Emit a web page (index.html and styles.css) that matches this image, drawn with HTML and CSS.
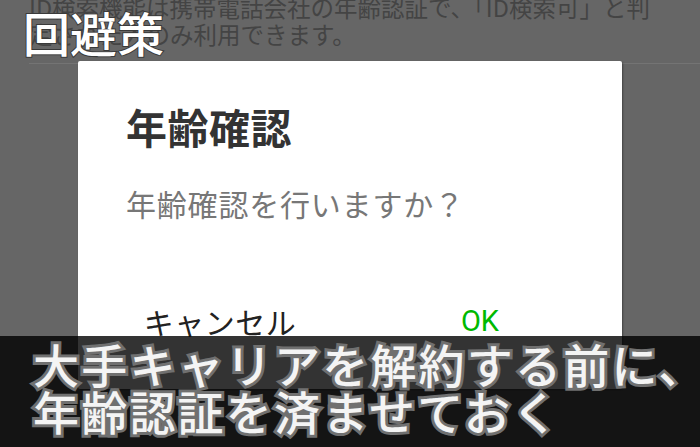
FILE: index.html
```html
<!DOCTYPE html>
<html lang="ja">
<head>
<meta charset="utf-8">
<link rel="stylesheet" href="styles.css">
</head>
<body>
<div class="screen">
  <div class="page-text">
    <p class="info">ID検索機能は携帯電話会社の年齢認証で、「ID検索可」と判定された人のみ利用できます。</p>
    <div class="divider"></div>
  </div>

  <div class="label">回避策</div>

  <div class="dialog">
    <h1 class="dialog-title">年齢確認</h1>
    <p class="dialog-msg">年齢確認を行いますか？</p>
    <div class="dialog-actions">
      <span class="btn btn-cancel">キャンセル</span>
      <span class="btn btn-ok">OK</span>
    </div>
  </div>

  <div class="caption">
    <p class="caption-text">大手キャリアを解約する前に、<br>年齢認証を済ませておく</p>
  </div>
</div>
</body>
</html>
```

FILE: styles.css
```css
html, body {
  margin: 0;
  padding: 0;
}
body {
  width: 700px;
  height: 447px;
  overflow: hidden;
  background: #666666;
  font-family: "Noto Sans CJK JP", "Roboto", sans-serif;
}
.screen {
  position: relative;
  width: 700px;
  height: 447px;
  overflow: hidden;
}
.page-text {
  padding-left: 29px;
}
.info {
  margin: -6px 0 0 0;
  width: 640px;
  font-size: 23.5px;
  line-height: 27px;
  color: #444444;
}
.divider {
  margin-top: 15px;
  height: 1px;
  background: #747474;
}
.label {
  position: absolute;
  left: 23px;
  top: 2px;
  font-size: 47px;
  line-height: 60px;
  font-weight: 500;
  color: #ffffff;
  -webkit-text-stroke: 2px #3a3a3a;
  paint-order: stroke fill;
}
.dialog {
  position: absolute;
  left: 78px;
  top: 61px;
  width: 544px;
  height: 328px;
  background: #ffffff;
  border-radius: 2px;
  box-shadow: 1px 1px 2px rgba(0,0,0,0.35);
  box-sizing: border-box;
  padding: 40px 0 0 48px;
}
.dialog-title {
  margin: 0;
  font-size: 41px;
  line-height: 50px;
  font-weight: 700;
  letter-spacing: 0.5px;
  color: #333333;
}
.dialog-msg {
  margin: 32px 0 0 0;
  font-size: 30px;
  line-height: 40px;
  letter-spacing: 0.8px;
  color: #777777;
}
.dialog-actions {
  margin: 78px 0 0 -48px;
  padding: 0 12px;
  display: grid;
  grid-template-columns: 1fr 1fr;
}
.btn {
  text-align: center;
  font-size: 29px;
  line-height: 40px;
  font-family: "Roboto", "Noto Sans CJK JP", sans-serif;
}
.btn-cancel {
  color: #222222;
  font-size: 30px;
  letter-spacing: 0.5px;
  font-family: "Noto Sans CJK JP", sans-serif;
}
.btn-ok {
  color: #00b900;
}
.caption {
  position: absolute;
  left: 0;
  bottom: 0;
  width: 700px;
  height: 111px;
  background: rgba(0,0,0,0.8);
  box-sizing: border-box;
  padding: 4px 0 0 33px;
}
.caption-text {
  margin: 0;
  font-size: 46px;
  line-height: 47px;
  font-weight: 500;
  letter-spacing: 2.2px;
  color: #f4f4f4;
  -webkit-text-stroke: 6px #707070;
  paint-order: stroke fill;
  white-space: nowrap;
}
```
